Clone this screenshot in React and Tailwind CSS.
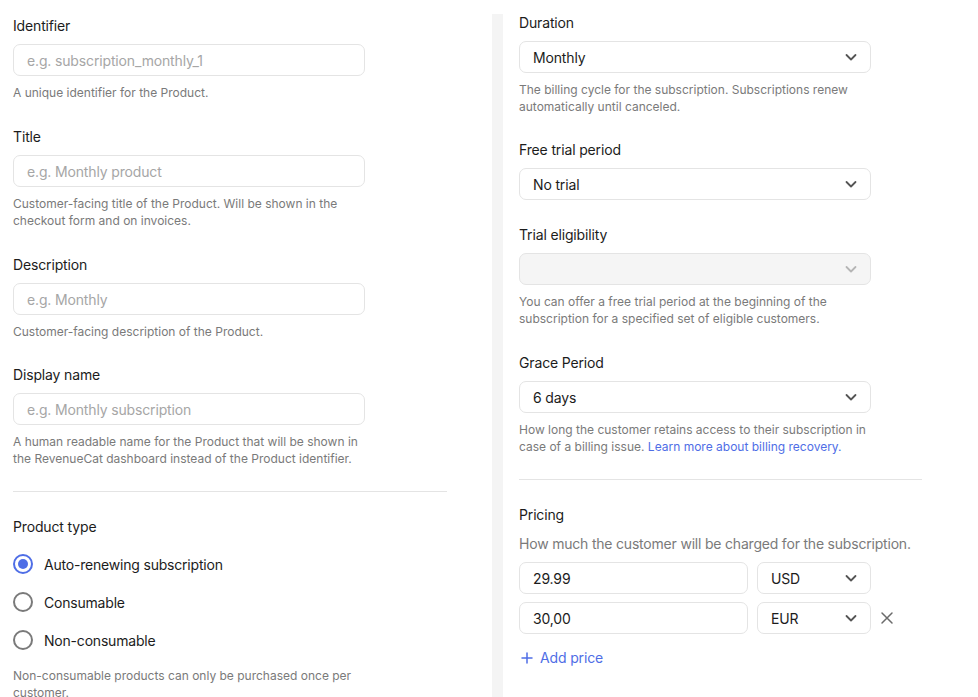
import React from "react";

const FONT = { fontFamily: 'Inter, "Liberation Sans", sans-serif' };

function Chevron({ disabled }) {
  return (
    <svg width="14" height="14" viewBox="0 0 14 14" fill="none" className="shrink-0">
      <path d="M2.5 5 L7 9.5 L11.5 5" stroke={disabled ? "#b5b5b5" : "#555555"} strokeWidth="1.8" strokeLinecap="round" strokeLinejoin="round" />
    </svg>
  );
}

function Label({ children }) {
  return <div className="text-[14px] leading-5 pt-px tracking-[-0.15px] text-[#1c1c1c] mb-2">{children}</div>;
}

function Help({ children, className = "mt-2" }) {
  return <div className={"text-[12px] leading-[17px] text-[#7a7a7a] w-[352px] " + className}>{children}</div>;
}

function Input({ placeholder, value, className = "w-[352px]" }) {
  return (
    <div className={"h-8 border border-[#e4e4e4] rounded-[7px] bg-white flex items-center px-[13px] text-[14px] tracking-[-0.15px] " + className}>
      {value ? <span className="text-[#1c1c1c]">{value}</span> : <span className="text-[#a6a6a6]">{placeholder}</span>}
    </div>
  );
}

function Select({ value, disabled, className = "w-[352px]" }) {
  return (
    <div className={"h-8 border border-[#e4e4e4] rounded-[7px] flex items-center justify-between pl-[13px] pr-[12px] text-[14px] tracking-[-0.15px] " + (disabled ? "bg-[#f5f5f5] " : "bg-white ") + className}>
      <span className="text-[#1c1c1c]">{value}</span>
      <Chevron disabled={disabled} />
    </div>
  );
}

function Radio({ checked, label }) {
  return (
    <div className="flex items-center h-5 gap-[11px]">
      {checked ? (
        <div className="w-5 h-5 rounded-full border-2 border-[#4f6ee6] flex items-center justify-center">
          <div className="w-[10px] h-[10px] rounded-full bg-[#4f6ee6]" />
        </div>
      ) : (
        <div className="w-5 h-5 rounded-full border-2 border-[#7a7a7a]" />
      )}
      <span className="text-[14px] tracking-[-0.2px] text-[#1c1c1c]">{label}</span>
    </div>
  );
}

export default function App() {
  return (
    <div style={FONT} className="w-[978px] h-[697px] bg-white flex overflow-hidden">
      {/* Left column */}
      <div className="w-[492px] shrink-0 pl-[13px] pt-[15px]">
        <div>
          <Label>Identifier</Label>
          <Input placeholder="e.g. subscription_monthly_1" />
          <Help>A unique identifier for the Product.</Help>
        </div>
        <div className="mt-[25px]">
          <Label>Title</Label>
          <Input placeholder="e.g. Monthly product" />
          <Help>Customer-facing title of the Product. Will be shown in the checkout form and on invoices.</Help>
        </div>
        <div className="mt-[25px]">
          <Label>Description</Label>
          <Input placeholder="e.g. Monthly" />
          <Help>Customer-facing description of the Product.</Help>
        </div>
        <div className="mt-[24px]">
          <Label>Display name</Label>
          <Input placeholder="e.g. Monthly subscription" />
          <Help>A human readable name for the Product that will be shown in the RevenueCat dashboard instead of the Product identifier.</Help>
        </div>
        <div className="w-[434px] h-px bg-[#e4e4e4] mt-[24px]" />
        <div className="mt-[24px]">
          <div className="text-[14px] leading-5 pt-px tracking-[-0.15px] text-[#1c1c1c]">Product type</div>
          <div className="mt-[17px] flex flex-col gap-[18px]">
            <Radio checked label="Auto-renewing subscription" />
            <Radio label="Consumable" />
            <Radio label="Non-consumable" />
          </div>
          <Help className="mt-[17px]">Non-consumable products can only be purchased once per customer.</Help>
        </div>
      </div>

      {/* Gray strip */}
      <div className="w-[11px] shrink-0 mt-[14px] bg-[#f4f4f4]" />

      {/* Right column */}
      <div className="flex-1 pl-4 pt-3">
        <div>
          <Label>Duration</Label>
          <Select value="Monthly" />
          <Help>The billing cycle for the subscription. Subscriptions renew automatically until canceled.</Help>
        </div>
        <div className="mt-[24px]">
          <Label>Free trial period</Label>
          <Select value="No trial" />
        </div>
        <div className="mt-[24px]">
          <Label>Trial eligibility</Label>
          <Select value="" disabled />
          <Help>You can offer a free trial period at the beginning of the subscription for a specified set of eligible customers.</Help>
        </div>
        <div className="mt-[25px]">
          <Label>Grace Period</Label>
          <Select value="6 days" />
          <Help>
            How long the customer retains access to their subscription in case of a billing issue.{" "}
            <span className="text-[#4f6ee6]">Learn more about billing recovery.</span>
          </Help>
        </div>
        <div className="w-[403px] h-px bg-[#e4e4e4] mt-[24px]" />
        <div className="mt-[24px]">
          <div className="text-[14px] leading-5 pt-px tracking-[-0.15px] text-[#1c1c1c]">Pricing</div>
          <div className="text-[14px] leading-5 tracking-[-0.2px] text-[#7a7a7a] mt-[9px]">How much the customer will be charged for the subscription.</div>
          <div className="mt-2 flex flex-col gap-2">
            <div className="flex items-center gap-[9px]">
              <Input value="29.99" className="w-[229px]" />
              <Select value="USD" className="w-[114px]" />
            </div>
            <div className="flex items-center gap-[9px]">
              <Input value="30,00" className="w-[229px]" />
              <Select value="EUR" className="w-[114px]" />
              <svg width="14" height="14" viewBox="0 0 14 14" fill="none">
                <path d="M2 2 L12 12 M12 2 L2 12" stroke="#6b6b6b" strokeWidth="1.5" strokeLinecap="round" />
              </svg>
            </div>
          </div>
          <div className="mt-[14px] flex items-center gap-[7px] pl-[2px] text-[14px] leading-5 tracking-[-0.15px] text-[#4f6ee6]">
            <svg width="12" height="12" viewBox="0 0 12 12" fill="none">
              <path d="M6 1 V11 M1 6 H11" stroke="#4f6ee6" strokeWidth="1.5" strokeLinecap="round" />
            </svg>
            <span>Add price</span>
          </div>
        </div>
      </div>
    </div>
  );
}
